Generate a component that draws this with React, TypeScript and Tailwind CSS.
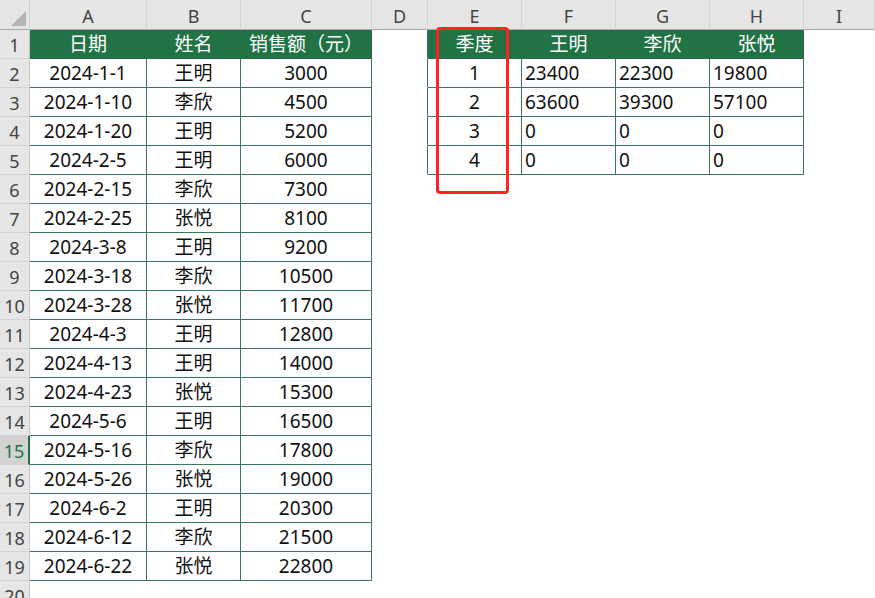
import React from 'react';

const COLS = ['A', 'B', 'C', 'D', 'E', 'F', 'G', 'H', 'I'];

const LEFT: string[][] = [
  ['日期', '姓名', '销售额（元）'],
  ['2024-1-1', '王明', '3000'],
  ['2024-1-10', '李欣', '4500'],
  ['2024-1-20', '王明', '5200'],
  ['2024-2-5', '王明', '6000'],
  ['2024-2-15', '李欣', '7300'],
  ['2024-2-25', '张悦', '8100'],
  ['2024-3-8', '王明', '9200'],
  ['2024-3-18', '李欣', '10500'],
  ['2024-3-28', '张悦', '11700'],
  ['2024-4-3', '王明', '12800'],
  ['2024-4-13', '王明', '14000'],
  ['2024-4-23', '张悦', '15300'],
  ['2024-5-6', '王明', '16500'],
  ['2024-5-16', '李欣', '17800'],
  ['2024-5-26', '张悦', '19000'],
  ['2024-6-2', '王明', '20300'],
  ['2024-6-12', '李欣', '21500'],
  ['2024-6-22', '张悦', '22800'],
];

const RIGHT: string[][] = [
  ['季度', '王明', '李欣', '张悦'],
  ['1', '23400', '22300', '19800'],
  ['2', '63600', '39300', '57100'],
  ['3', '0', '0', '0'],
  ['4', '0', '0', '0'],
];

const font = 'font-["Noto_Sans","Noto_Sans_CJK_SC",sans-serif]';

function cellText(r: number, c: number): string {
  if (c <= 3 && r <= 19) return LEFT[r - 1][c - 1];
  if (c >= 5 && c <= 8 && r <= 5) return RIGHT[r - 1][c - 5];
  return '';
}

function Cell({ r, c }: { r: number; c: number }) {
  const inLeft = c <= 3 && r <= 19;
  const inRight = c >= 5 && c <= 8 && r <= 5;
  const isHead = r === 1 && (c <= 3 || (c >= 5 && c <= 8));
  const leftEdge = c === 4 && r <= 5;
  const text = cellText(r, c);

  let cls = 'flex items-center overflow-hidden whitespace-nowrap border-r border-b text-[19px] leading-none pt-[1px] ';
  if (isHead) {
    cls += 'bg-[#217346] text-white justify-center border-r-[#217346] border-b-[#2a6b48] ';
  } else if (inLeft || inRight) {
    cls += 'bg-white text-[#111] border-[#3a7a5a] ';
    cls += inRight && c > 5 ? 'justify-start pl-[3px] ' : 'justify-center ';
  } else if (leftEdge) {
    cls += 'bg-white border-r-[#3a7a5a] border-b-transparent ';
  } else {
    cls += 'bg-white border-transparent ';
  }
  return <div className={cls}>{text}</div>;
}

export default function App() {
  const rows = Array.from({ length: 20 }, (_, i) => i + 1);
  return (
    <div className={`relative h-[598px] w-[875px] overflow-hidden bg-white ${font}`}>
      <div className="grid grid-cols-[30px_117px_94px_131px_56px_94px_94px_94px_94px_1fr] grid-rows-[30px_repeat(20,29px)]">
        <div className="relative border-r border-b border-r-[#d0d0d0] border-b-[#a8a8a8] bg-[#e6e6e6]">
          <svg className="absolute right-[3px] bottom-[3px]" width="15" height="15" viewBox="0 0 15 15">
            <polygon points="15,0 15,15 0,15" fill="#b5b5b5" />
          </svg>
        </div>
        {COLS.map((l) => (
          <div
            key={l}
            className="flex items-center justify-center border-r border-b border-r-[#d4d4d4] border-b-[#a8a8a8] bg-[#e6e6e6] pt-[2px] text-[18px] leading-none text-[#444]"
          >
            {l}
          </div>
        ))}
        {rows.map((r) => (
          <React.Fragment key={r}>
            <div
              className={
                r === 15
                  ? 'flex items-center justify-center border-r-2 border-b border-r-[#217346] border-b-[#d4d4d4] bg-[#d2d2d2] pt-[2px] text-[18px] leading-none text-[#217346]'
                  : 'flex items-center justify-center border-r border-b border-r-[#c6c6c6] border-b-[#d4d4d4] bg-[#e6e6e6] pt-[2px] text-[18px] leading-none text-[#444]'
              }
            >
              {r}
            </div>
            {COLS.map((_, i) => (
              <Cell key={i} r={r} c={i + 1} />
            ))}
          </React.Fragment>
        ))}
      </div>
      <div className="absolute left-[436px] top-[27px] h-[167px] w-[73px] rounded-[4px] border-[3px] border-[#ff2323]" />
    </div>
  );
}
